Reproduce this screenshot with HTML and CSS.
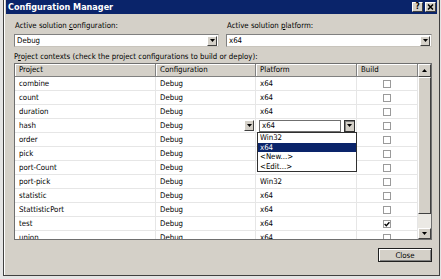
FILE: index.html
```html
<!DOCTYPE html>
<html>
<head>
  <meta charset="utf-8">
  <link rel="stylesheet" href="styles.css">
</head>
<body>
  <div class="window">
    <div class="titlebar">
      <span class="title">Configuration Manager</span>
      <div class="caption-buttons">
        <span class="caption-btn help">?</span>
        <span class="caption-btn">
          <svg width="7" height="6" viewBox="0 0 7 6"><path d="M1 0.5L6 5.5M6 0.5L1 5.5" stroke="#000" stroke-width="1.5"/></svg>
        </span>
      </div>
    </div>

    <div class="content">
      <div class="top-fields">
        <div class="field">
          <div class="field-label">Active solution <u>c</u>onfiguration:</div>
          <div class="combo">
            <span class="combo-value">Debug</span>
            <span class="drop-btn"><svg width="5" height="3" viewBox="0 0 5 3"><path d="M0 0h5L2.5 3z" fill="#000"/></svg></span>
          </div>
        </div>
        <div class="field">
          <div class="field-label">Active solution <u>p</u>latform:</div>
          <div class="combo">
            <span class="combo-value">x64</span>
            <span class="drop-btn"><svg width="5" height="3" viewBox="0 0 5 3"><path d="M0 0h5L2.5 3z" fill="#000"/></svg></span>
          </div>
        </div>
      </div>

      <div class="contexts-label">P<u>r</u>oject contexts (check the project configurations to build or deploy):</div>

      <div class="grid">
        <div class="grid-main">
          <div class="grid-row grid-header">
            <div class="cell">Project</div>
            <div class="cell">Configuration</div>
            <div class="cell">Platform</div>
            <div class="cell">Build</div>
          </div>
          <div class="grid-body">
            <div class="grid-row">
              <div class="cell">combine</div><div class="cell">Debug</div><div class="cell">x64</div>
              <div class="cell build"><span class="checkbox"></span></div>
            </div>
            <div class="grid-row">
              <div class="cell">count</div><div class="cell">Debug</div><div class="cell">x64</div>
              <div class="cell build"><span class="checkbox"></span></div>
            </div>
            <div class="grid-row">
              <div class="cell">duration</div><div class="cell">Debug</div><div class="cell">x64</div>
              <div class="cell build"><span class="checkbox"></span></div>
            </div>
            <div class="grid-row">
              <div class="cell">hash</div>
              <div class="cell edit-cell">
                <span>Debug</span>
                <span class="drop-btn cell-drop"><svg width="5" height="3" viewBox="0 0 5 3"><path d="M0 0h5L2.5 3z" fill="#000"/></svg></span>
              </div>
              <div class="cell edit-cell platform-edit">
                <span class="edit-box">x64</span>
                <span class="drop-btn cell-drop pressed"><svg width="5" height="3" viewBox="0 0 5 3"><path d="M0 0h5L2.5 3z" fill="#000"/></svg></span>
                <div class="drop-list">
                  <div class="drop-item">Win32</div>
                  <div class="drop-item selected">x64</div>
                  <div class="drop-item">&lt;New...&gt;</div>
                  <div class="drop-item">&lt;Edit...&gt;</div>
                </div>
              </div>
              <div class="cell build"><span class="checkbox"></span></div>
            </div>
            <div class="grid-row">
              <div class="cell">order</div><div class="cell">Debug</div><div class="cell"></div>
              <div class="cell build"><span class="checkbox"></span></div>
            </div>
            <div class="grid-row">
              <div class="cell">pick</div><div class="cell">Debug</div><div class="cell"></div>
              <div class="cell build"><span class="checkbox"></span></div>
            </div>
            <div class="grid-row">
              <div class="cell">port-Count</div><div class="cell">Debug</div><div class="cell"></div>
              <div class="cell build"><span class="checkbox"></span></div>
            </div>
            <div class="grid-row">
              <div class="cell">port-pick</div><div class="cell">Debug</div><div class="cell">Win32</div>
              <div class="cell build"><span class="checkbox"></span></div>
            </div>
            <div class="grid-row">
              <div class="cell">statistic</div><div class="cell">Debug</div><div class="cell">x64</div>
              <div class="cell build"><span class="checkbox"></span></div>
            </div>
            <div class="grid-row">
              <div class="cell">StattisticPort</div><div class="cell">Debug</div><div class="cell">x64</div>
              <div class="cell build"><span class="checkbox"></span></div>
            </div>
            <div class="grid-row">
              <div class="cell">test</div><div class="cell">Debug</div><div class="cell">x64</div>
              <div class="cell build">
                <span class="checkbox"><svg width="6" height="6" viewBox="0 0 6 6"><path d="M0.6 3L2.3 4.7L5.4 1.2" stroke="#000" stroke-width="1.3" fill="none"/></svg></span>
              </div>
            </div>
            <div class="grid-row">
              <div class="cell">union</div><div class="cell">Debug</div><div class="cell">x64</div>
              <div class="cell build"><span class="checkbox"></span></div>
            </div>
          </div>
        </div>
        <div class="scrollbar">
          <span class="scroll-btn up"><svg width="5" height="3" viewBox="0 0 5 3"><path d="M0 3h5L2.5 0z" fill="#000"/></svg></span>
          <span class="scroll-thumb"></span>
          <span class="scroll-track"></span>
          <span class="scroll-btn down"><svg width="5" height="3" viewBox="0 0 5 3"><path d="M0 0h5L2.5 3z" fill="#000"/></svg></span>
        </div>
      </div>

      <div class="footer">
        <button class="close-button">Close</button>
      </div>
    </div>
  </div>
</body>
</html>
```

FILE: styles.css
```css
* {
  box-sizing: border-box;
}

body {
  margin: 0;
  background: #e4e4e4;
  font-family: "DejaVu Sans Condensed", "Liberation Sans", Arial, sans-serif;
  font-size: 7.8px;
  color: #000;
}

.window {
  width: 437px;
  height: 276px;
  margin-left: 3px;
  padding: 0 2px 2px 2px;
  background: #d4d0c8;
  border: 1px solid #404040;
  border-top: none;
  box-shadow: inset 1px 0 #fff;
}

.titlebar {
  height: 14px;
  background: #0a246a;
  display: flex;
  align-items: center;
  justify-content: space-between;
  padding: 0 1px 0 2px;
}

.title {
  color: #fff;
  font-weight: bold;
  font-size: 9px;
}

.caption-buttons {
  display: flex;
  gap: 2px;
}

.caption-btn {
  width: 11px;
  height: 10px;
  background: #d4d0c8;
  border: 1px solid;
  border-color: #fff #404040 #404040 #fff;
  display: flex;
  align-items: center;
  justify-content: center;
}

.help {
  font-weight: bold;
  font-size: 8px;
  line-height: 1;
}

.content {
  padding: 7px 5px 0 8px;
}

.top-fields {
  display: grid;
  grid-template-columns: 205px 1fr;
  gap: 7px;
}

.field-label {
  height: 10px;
  line-height: 10px;
  padding-left: 1px;
  margin-bottom: 3px;
}

.combo {
  height: 13px;
  background: #fff;
  border: 1px solid;
  border-color: #808080 #c8c4bc #c8c4bc #808080;
  display: flex;
  align-items: center;
  justify-content: space-between;
  padding: 0 1px 0 2px;
}

.drop-btn {
  width: 10px;
  height: 10px;
  background: #d4d0c8;
  border: 1px solid;
  border-color: #fff #404040 #404040 #fff;
  display: flex;
  align-items: center;
  justify-content: center;
}

.contexts-label {
  height: 10px;
  line-height: 10px;
  margin-top: 5px;
  margin-bottom: 1px;
}

.grid {
  height: 177px;
  display: flex;
  border: 1px solid #6f6f6f;
  background: #fff;
  overflow: hidden;
}

.grid-main {
  width: 403px;
}

.grid-row {
  display: grid;
  grid-template-columns: 141px 100px 101px 61px;
  height: 14px;
  border-bottom: 1px solid #e6e6e6;
}

.cell {
  padding-left: 4px;
  line-height: 13px;
  border-right: 1px solid #e6e6e6;
  white-space: nowrap;
}

.grid-header {
  height: 13px;
  background: #d4d0c8;
  border-bottom: 1px solid #808080;
}

.grid-header .cell {
  line-height: 12px;
  border-right: 1px solid #808080;
  box-shadow: inset 1px 1px #fff;
}

.grid-body {
  height: 162px;
  overflow: hidden;
}

.build {
  display: flex;
  align-items: center;
  justify-content: center;
  padding-left: 0;
}

.checkbox {
  width: 8px;
  height: 8px;
  border: 1px solid #9a9a9a;
  background: #fff;
  display: flex;
  align-items: center;
  justify-content: center;
}

.edit-cell {
  display: flex;
  align-items: center;
  justify-content: space-between;
  padding-right: 0;
}

.cell-drop {
  width: 10px;
  height: 11px;
  margin-right: 1px;
}

.platform-edit {
  position: relative;
  padding-left: 3px;
}

.edit-box {
  width: 82px;
  height: 12px;
  line-height: 10px;
  padding-left: 2px;
  border: 1px solid #6f6f6f;
  background: #fff;
}

.pressed {
  width: 11px;
  height: 12px;
  border: 1px solid #303030;
  box-shadow: inset 1px 1px #808080;
}

.drop-list {
  position: absolute;
  left: 1px;
  top: 13px;
  width: 100px;
  background: #fff;
  border: 1px solid #303030;
  z-index: 2;
}

.drop-item {
  height: 9.5px;
  line-height: 9.5px;
  padding-left: 2px;
}

.drop-item.selected {
  background: #0a246a;
  color: #fff;
}

.scrollbar {
  width: 13px;
  display: flex;
  flex-direction: column;
  background: #ebe9e4;
}

.scroll-btn {
  height: 13px;
  background: #d4d0c8;
  border: 1px solid;
  border-color: #fff #404040 #404040 #fff;
  display: flex;
  align-items: center;
  justify-content: center;
}

.scroll-btn.down {
  height: 11px;
}

.scroll-thumb {
  height: 137px;
  background: #d4d0c8;
  border: 1px solid;
  border-color: #fff #404040 #404040 #fff;
}

.scroll-track {
  flex: 1;
}

.footer {
  display: flex;
  justify-content: flex-end;
  margin-top: 8px;
}

.close-button {
  width: 54px;
  height: 14px;
  padding: 0;
  font-family: inherit;
  font-size: 7.8px;
  color: #000;
  background: #d4d0c8;
  border: 1px solid #202020;
  box-shadow: inset 1px 1px #fff, inset -1px -1px #808080;
}
```
